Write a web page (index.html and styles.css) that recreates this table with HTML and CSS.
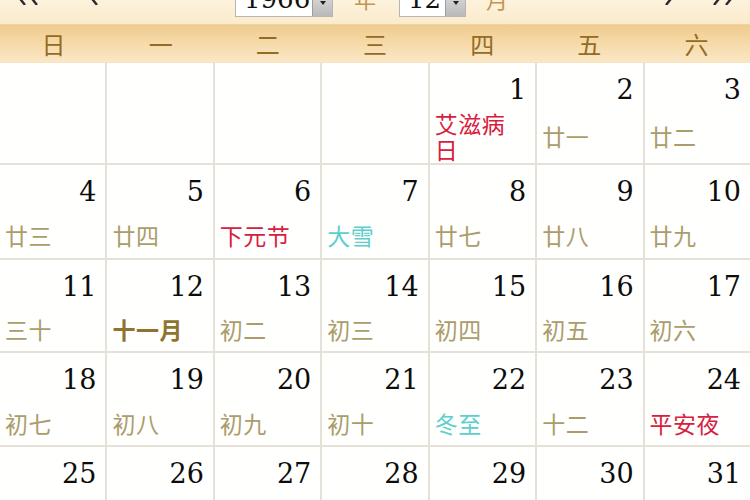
FILE: index.html
```html
<!DOCTYPE html>
<html lang="zh">
<head>
<meta charset="utf-8">
<title>万年历</title>
<link rel="stylesheet" href="styles.css">
</head>
<body>
<div class="page">
  <div class="bar">
    <div class="bar-in">
      <svg class="nav nav-dbl-l" width="24" height="20" viewBox="0 0 24 20"><polyline points="10,0 2,10 10,20" /><polyline points="22,0 14,10 22,20" /></svg>
      <svg class="nav nav-l" width="12" height="20" viewBox="0 0 12 20"><polyline points="10,0 2,10 10,20" /></svg>
      <div class="sel sel-year"><span class="sel-val">1966</span><span class="sel-btn"><i></i></span></div>
      <span class="unit unit-y">年</span>
      <div class="sel sel-month"><span class="sel-val">12</span><span class="sel-btn"><i></i></span></div>
      <span class="unit unit-m">月</span>
      <svg class="nav nav-r" width="12" height="20" viewBox="0 0 12 20"><polyline points="2,0 10,10 2,20" /></svg>
      <svg class="nav nav-dbl-r" width="24" height="20" viewBox="0 0 24 20"><polyline points="2,0 10,10 2,20" /><polyline points="14,0 22,10 14,20" /></svg>
    </div>
  </div>
  <div class="week">
    <span>日</span><span>一</span><span>二</span><span>三</span><span>四</span><span>五</span><span>六</span>
  </div>
  <div class="grid">
    <div class="cell"></div><div class="cell"></div><div class="cell"></div><div class="cell"></div>
    <div class="cell"><div class="num">1</div><div class="lunar"><span class="fest">艾滋病日</span></div></div>
    <div class="cell"><div class="num">2</div><div class="lunar"><span>廿一</span></div></div>
    <div class="cell"><div class="num">3</div><div class="lunar"><span>廿二</span></div></div>

    <div class="cell"><div class="num">4</div><div class="lunar"><span>廿三</span></div></div>
    <div class="cell"><div class="num">5</div><div class="lunar"><span>廿四</span></div></div>
    <div class="cell"><div class="num">6</div><div class="lunar"><span class="fest">下元节</span></div></div>
    <div class="cell"><div class="num">7</div><div class="lunar"><span class="term">大雪</span></div></div>
    <div class="cell"><div class="num">8</div><div class="lunar"><span>廿七</span></div></div>
    <div class="cell"><div class="num">9</div><div class="lunar"><span>廿八</span></div></div>
    <div class="cell"><div class="num">10</div><div class="lunar"><span>廿九</span></div></div>

    <div class="cell"><div class="num">11</div><div class="lunar"><span>三十</span></div></div>
    <div class="cell"><div class="num">12</div><div class="lunar"><span class="month">十一月</span></div></div>
    <div class="cell"><div class="num">13</div><div class="lunar"><span>初二</span></div></div>
    <div class="cell"><div class="num">14</div><div class="lunar"><span>初三</span></div></div>
    <div class="cell"><div class="num">15</div><div class="lunar"><span>初四</span></div></div>
    <div class="cell"><div class="num">16</div><div class="lunar"><span>初五</span></div></div>
    <div class="cell"><div class="num">17</div><div class="lunar"><span>初六</span></div></div>

    <div class="cell"><div class="num">18</div><div class="lunar"><span>初七</span></div></div>
    <div class="cell"><div class="num">19</div><div class="lunar"><span>初八</span></div></div>
    <div class="cell"><div class="num">20</div><div class="lunar"><span>初九</span></div></div>
    <div class="cell"><div class="num">21</div><div class="lunar"><span>初十</span></div></div>
    <div class="cell"><div class="num">22</div><div class="lunar"><span class="term">冬至</span></div></div>
    <div class="cell"><div class="num">23</div><div class="lunar"><span>十二</span></div></div>
    <div class="cell"><div class="num">24</div><div class="lunar"><span class="fest">平安夜</span></div></div>

    <div class="cell"><div class="num">25</div><div class="lunar"><span class="fest">圣诞节</span></div></div>
    <div class="cell"><div class="num">26</div><div class="lunar"><span>十五</span></div></div>
    <div class="cell"><div class="num">27</div><div class="lunar"><span>十六</span></div></div>
    <div class="cell"><div class="num">28</div><div class="lunar"><span>十七</span></div></div>
    <div class="cell"><div class="num">29</div><div class="lunar"><span>十八</span></div></div>
    <div class="cell"><div class="num">30</div><div class="lunar"><span>十九</span></div></div>
    <div class="cell"><div class="num">31</div><div class="lunar"><span>二十</span></div></div>
  </div>
</div>
</body>
</html>
```
FILE: styles.css
```css
html, body {
  margin: 0;
  padding: 0;
  background: #fffefb;
}
.page {
  width: 750px;
  height: 500px;
  overflow: hidden;
  font-family: "Noto Sans CJK SC", "Noto Sans", sans-serif;
}
.bar {
  height: 25px;
  overflow: hidden;
  background: linear-gradient(#fdf2dc, #fbebcc);
  border-bottom: 1px solid #ecd4a4;
  box-sizing: border-box;
}
.bar-in {
  display: flex;
  align-items: flex-end;
  height: 17px;
}
.nav {
  flex: none;
  margin-bottom: 12px;
}
.nav polyline {
  fill: none;
  stroke: #2a2a2a;
  stroke-width: 2.4;
}
.nav-dbl-l { margin-left: 15px; }
.nav-l { margin-left: 48px; }
.nav-r { margin-left: 156px; }
.nav-dbl-r { margin-left: 36px; }

.sel {
  flex: none;
  display: flex;
  height: 32px;
  box-sizing: border-box;
  background: #fff;
  border: 1px solid #b5b5b5;
}
.sel-year { width: 98px; margin-left: 136px; }
.sel-month { width: 67px; margin-left: 23px; }
.sel-val {
  flex: 1;
  padding-left: 8px;
  font-family: "DejaVu Serif", serif;
  font-size: 26px;
  line-height: 26px;
  color: #111;
}
.sel-btn {
  flex: none;
  width: 20px;
  display: flex;
  align-items: flex-end;
  justify-content: center;
  padding-bottom: 11px;
  box-sizing: border-box;
  background: linear-gradient(#e6e6e6, #b9b9b9);
  border-left: 1px solid #9d9d9d;
}
.sel-btn i {
  display: block;
  width: 0;
  height: 0;
  border-left: 3px solid transparent;
  border-right: 3px solid transparent;
  border-top: 4px solid #222;
}
.unit {
  flex: none;
  font-size: 22px;
  line-height: 22px;
  color: #c29552;
  margin-bottom: 8px;
}
.unit-y { margin-left: 21px; }
.unit-m { margin-left: 20px; }

.week {
  display: grid;
  grid-template-columns: repeat(7, 1fr);
  height: 38px;
  background: linear-gradient(#efcb8e, #f5d9a6 45%, #fbe7c6);
  border-bottom: 1px solid #f6e3c2;
  box-sizing: border-box;
}
.week span {
  text-align: center;
  font-size: 24px;
  line-height: 38px;
  color: #946b24;
  font-weight: 400;
}

.grid {
  display: grid;
  grid-template-columns: repeat(7, 1fr);
  grid-template-rows: 100px 93px 91px 92px 93px;
  gap: 2px;
  background: #e5e1d8;
}
.cell {
  background: #fffffd;
  display: flex;
  flex-direction: column;
  min-width: 0;
}
.num {
  padding: 12px 9px 0 0;
  text-align: right;
  font-family: "DejaVu Serif", serif;
  font-size: 27px;
  line-height: 30px;
  color: #0c0c0c;
}
.lunar {
  margin-top: 5px;
  height: 52px;
  display: flex;
  align-items: center;
  padding: 0 12px 0 5px;
}
.lunar span {
  font-size: 23px;
  line-height: 26px;
  letter-spacing: 0.5px;
  color: #ab9c6c;
}
.lunar .fest { color: #d8203e; }
.lunar .term { color: #5ccfcf; }
.lunar .month { color: #8f7430; font-weight: 700; }
```
